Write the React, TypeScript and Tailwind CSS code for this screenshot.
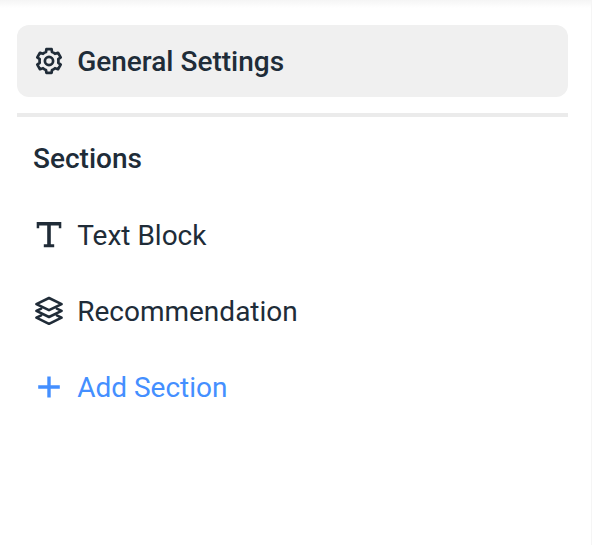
import type { ReactNode } from 'react'

function GearIcon() {
  return (
    <svg width="32" height="32" viewBox="-16 -16 32 32" fill="none" stroke="currentColor" strokeWidth="2.7" strokeLinejoin="round">
      <path d="M-3-9L-2.6-11.8H2.6L3-9Q4.5-8.5 6-7.2L9-8.2L11.7-3.6L9.3-1.8Q9.6 0 9.3 1.8L11.7 3.6L9 8.2L6 7.2Q4.5 8.5 3 9L2.6 11.8H-2.6L-3 9Q-4.5 8.5-6 7.2L-9 8.2L-11.7 3.6L-9.3 1.8Q-9.6 0-9.3-1.8L-11.7-3.6L-9-8.2L-6-7.2Q-4.5-8.5-3-9Z" />
      <circle r="4.1" />
    </svg>
  )
}

function TextIcon() {
  return (
    <svg width="32" height="32" viewBox="0 0 32 32" fill="currentColor">
      <path d="M3.7 3H28.3V9.2H25.8V6.4H17.8V25.3H21.2V28.2H10.8V25.3H14.2V6.4H6.2V9.2H3.7Z" />
    </svg>
  )
}

function LayersIcon() {
  return (
    <svg width="32" height="32" viewBox="0 0 32 32" fill="none" stroke="currentColor" strokeWidth="2.6" strokeLinecap="round" strokeLinejoin="round">
      <path d="M16 3L28.6 9.1L16 15.2L3.4 9.1Z" />
      <path d="M8.2 13.6L3.4 15.9L16 22L28.6 15.9L23.8 13.6" />
      <path d="M8.2 20.4L3.4 22.7L16 28.8L28.6 22.7L23.8 20.4" />
    </svg>
  )
}

function PlusIcon() {
  return (
    <svg width="32" height="32" viewBox="0 0 32 32" stroke="currentColor" strokeWidth="3.4">
      <path d="M5.2 16H26.8M16 5.4V26.6" />
    </svg>
  )
}

interface MenuItemProps {
  icon: ReactNode
  label: string
  className?: string
}

function MenuItem({ icon, label, className = '' }: MenuItemProps) {
  return (
    <button type="button" className={`flex w-full items-center gap-3 px-4 pt-0.5 text-left ${className}`}>
      <span className="-mt-[3px] -ml-[0.5px] shrink-0">{icon}</span>
      <span className="ml-[0.3px]">{label}</span>
    </button>
  )
}

export default function App() {
  return (
    <div className="h-[545px] w-[592px] overflow-hidden border-r border-[#f5f5f5] bg-white font-['Roboto',sans-serif] text-[28px] leading-8 text-[#202c38]">
      {/* Shadow cast by the header above the panel */}
      <div className="h-2 bg-linear-to-b from-[#f5f5f5] to-white" />
      <div className="mt-[17px] ml-[17.4px] w-[550.2px]">
        <MenuItem icon={<GearIcon />} label="General Settings" className="h-[72px] rounded-xl bg-[#f0f0f0] font-medium" />
        <div className="mt-4 h-1 bg-[#ebebeb]" />
        <h2 className="mt-[26px] px-[15.6px] font-medium">Sections</h2>
        <nav className="mt-6 flex flex-col gap-1">
          <MenuItem icon={<TextIcon />} label="Text Block" className="h-[72px]" />
          <MenuItem icon={<LayersIcon />} label="Recommendation" className="h-[72px]" />
          <MenuItem icon={<PlusIcon />} label="Add Section" className="h-[72px] text-[#448fff]" />
        </nav>
      </div>
    </div>
  )
}
